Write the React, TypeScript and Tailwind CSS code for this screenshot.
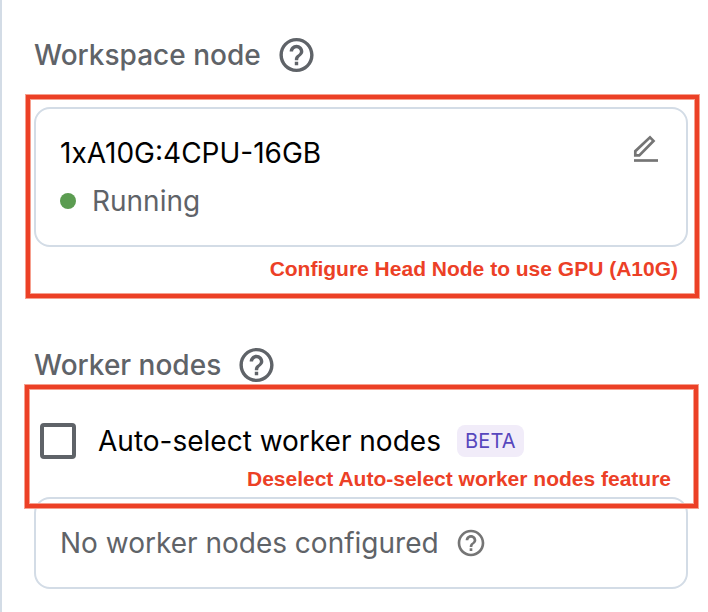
import React from "react";

function HelpIcon({ className }: { className: string }) {
  return (
    <svg viewBox="0 0 24 24" fill="currentColor" className={className}>
      <path d="M11 18h2v-2h-2v2zm1-16C6.48 2 2 6.48 2 12s4.48 10 10 10 10-4.48 10-10S17.52 2 12 2zm0 18c-4.41 0-8-3.59-8-8s3.59-8 8-8 8 3.59 8 8-3.59 8-8 8zm0-14c-2.21 0-4 1.79-4 4h2c0-1.1.9-2 2-2s2 .9 2 2c0 2-3 1.75-3 5h2c0-2.25 3-2.5 3-5 0-2.21-1.79-4-4-4z" />
    </svg>
  );
}

function EditIcon() {
  return (
    <svg viewBox="0 0 26 30" fill="none" stroke="#757575" className="h-[30px] w-[26px]">
      <path d="M2.3 18.2V22.4H6.3L20.5 7.9L17 4.3Z" strokeWidth="2.7" />
      <path d="M1 27.5H25" strokeWidth="2.7" />
    </svg>
  );
}

function Heading({ children }: { children: React.ReactNode }) {
  return (
    <div className="flex h-10 items-center gap-[15px] text-[#5f6368]">
      <h2 className="text-[28px] leading-10 font-medium">{children}</h2>
      <HelpIcon className="-my-px h-[42px] w-[41px]" />
    </div>
  );
}

export default function App() {
  return (
    <main className="relative h-[612px] w-[708px] overflow-hidden border-l-2 border-[#d3dce6] bg-white pt-[35px] pr-5 pl-8 font-['Inter',sans-serif] text-[28px] leading-10 whitespace-nowrap">
      <Heading>Workspace node</Heading>
      <section className="mt-8 flex h-[140px] justify-between rounded-2xl border-2 border-[#d3dce6] pt-6 pr-[27px] pl-6">
        <div>
          <p className="text-black">1xA10G:4CPU-16GB</p>
          <p className="mt-2 flex items-center gap-4 text-[#5f6368]">
            <span className="size-4 rounded-full bg-[#5b9c51]" />
            Running
          </p>
        </div>
        <EditIcon />
      </section>

      <div className="mt-[98px]">
        <Heading>Worker nodes</Heading>
      </div>
      <label className="mt-9 flex h-10 items-center pl-1.5">
        <span className="size-9 rounded-[4px] border-4 border-[#5f6368]" />
        <span className="ml-[22px] text-black">Auto-select worker nodes</span>
        <span className="ml-4 flex h-8 items-center rounded-lg bg-[#f1ecf9] px-2 text-[20px] tracking-[0.2px] text-[#5747bd]">BETA</span>
      </label>
      <section className="mt-9 flex h-[92px] items-center gap-4 rounded-2xl border-2 border-[#d3dce6] pl-6 text-[#5f6368]">
        <span>No worker nodes configured</span>
        <HelpIcon className="size-8 text-[#757575]" />
      </section>

      <div className="absolute top-[95px] left-[24px] flex h-[203px] w-[673px] items-end justify-end border-4 border-[#ec4026] pr-[17px] pb-[11px] font-['Liberation_Sans',sans-serif] text-[21px] leading-7 font-bold text-[#ec4026] shadow-[0_0_0_1px_#f6a08f,inset_0_0_0_1px_#f6a08f]">
        Configure Head Node to use GPU (A10G)
      </div>
      <div className="absolute top-[385px] left-[23px] flex h-[123px] w-[673px] items-end justify-end border-4 border-[#ec4026] pr-[23px] pb-[11px] font-['Liberation_Sans',sans-serif] text-[21px] leading-7 font-bold text-[#ec4026] shadow-[0_0_0_1px_#f6a08f,inset_0_0_0_1px_#f6a08f]">
        Deselect Auto-select worker nodes feature
      </div>
    </main>
  );
}
